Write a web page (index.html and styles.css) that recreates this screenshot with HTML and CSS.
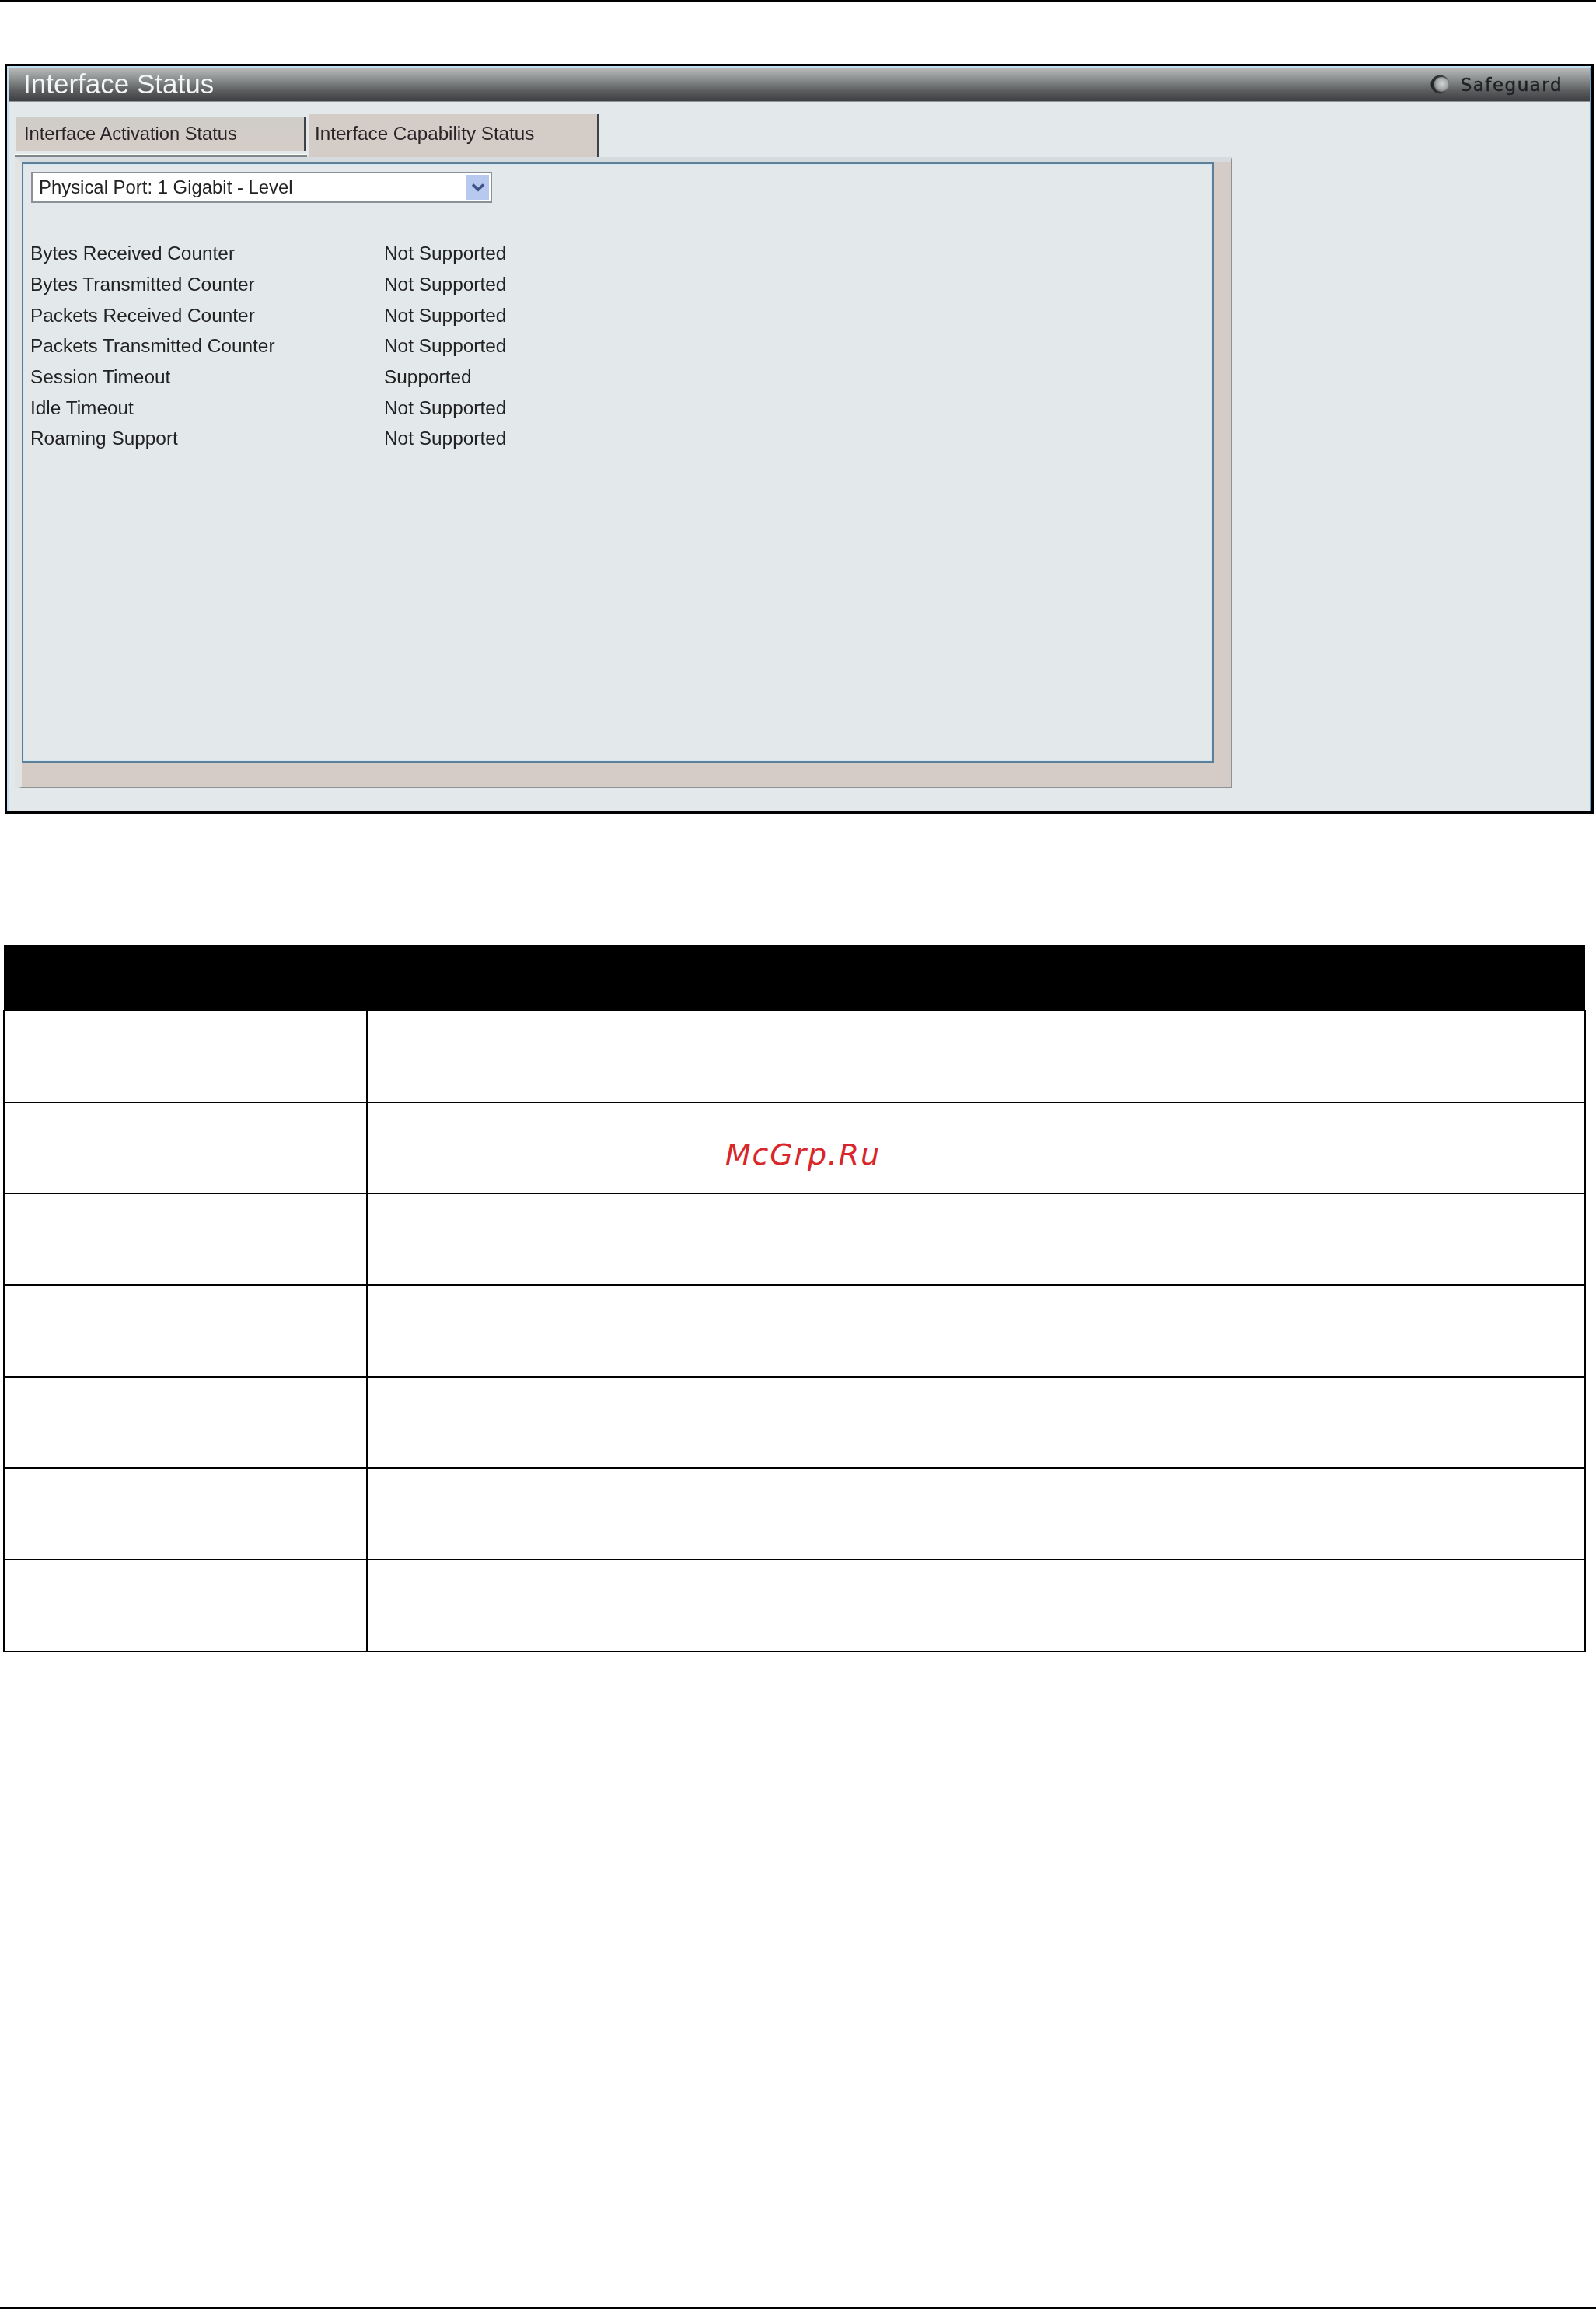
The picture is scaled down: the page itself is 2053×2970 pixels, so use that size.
FILE: index.html
```html
<!DOCTYPE html>
<html lang="en">
<head>
<meta charset="utf-8">
<title>Interface Status</title>
<link rel="stylesheet" href="styles.css">
</head>
<body>
<div class="page">
  <section class="window">
    <div class="window-inner">
      <header class="title-bar">
        <h1 class="title">Interface Status</h1>
        <div class="safeguard">
          <svg class="safeguard-icon" width="25" height="25" viewBox="0 0 25 25" aria-hidden="true">
            <defs>
              <linearGradient id="sgring" x1="0" y1="0" x2="1" y2="0">
                <stop offset="0" stop-color="#232426"/>
                <stop offset="0.6" stop-color="#3c3e40"/>
                <stop offset="1" stop-color="#77797b"/>
              </linearGradient>
              <radialGradient id="sg" cx="0.55" cy="0.45" r="0.6">
                <stop offset="0" stop-color="#d2d4d4"/>
                <stop offset="0.65" stop-color="#a4a7a8"/>
                <stop offset="1" stop-color="#66686a"/>
              </radialGradient>
            </defs>
            <circle cx="12.5" cy="12.5" r="12" fill="url(#sgring)"/>
            <circle cx="14" cy="12.5" r="9.5" fill="url(#sg)"/>
          </svg>
          <span class="safeguard-label">Safeguard</span>
        </div>
      </header>
      <div class="content">
        <nav class="tabs">
          <div class="tab-slot">
            <div class="tab tab-off">Interface Activation Status</div>
          </div>
          <div class="tab tab-on">Interface Capability Status</div>
        </nav>
        <div class="tab-panel">
          <div class="box">
            <div class="select">
              <span class="select-text">Physical Port: 1 Gigabit - Level</span>
              <span class="select-arrow">
                <svg width="18" height="12" viewBox="0 0 18 12" aria-hidden="true">
                  <path d="M2 2.5 L9 9 L16 2.5" fill="none" stroke="#3d5385" stroke-width="3.6"/>
                </svg>
              </span>
            </div>
            <dl class="caps">
              <div class="cap"><dt>Bytes Received Counter</dt><dd>Not Supported</dd></div>
              <div class="cap"><dt>Bytes Transmitted Counter</dt><dd>Not Supported</dd></div>
              <div class="cap"><dt>Packets Received Counter</dt><dd>Not Supported</dd></div>
              <div class="cap"><dt>Packets Transmitted Counter</dt><dd>Not Supported</dd></div>
              <div class="cap"><dt>Session Timeout</dt><dd>Supported</dd></div>
              <div class="cap"><dt>Idle Timeout</dt><dd>Not Supported</dd></div>
              <div class="cap"><dt>Roaming Support</dt><dd>Not Supported</dd></div>
            </dl>
          </div>
        </div>
      </div>
    </div>
  </section>

  <table class="params">
    <colgroup><col class="col-a"><col class="col-b"></colgroup>
    <thead>
      <tr><th></th><th class="th-last"></th></tr>
    </thead>
    <tbody>
      <tr><td></td><td></td></tr>
      <tr><td></td><td></td></tr>
      <tr><td></td><td></td></tr>
      <tr><td></td><td></td></tr>
      <tr><td></td><td></td></tr>
      <tr><td></td><td></td></tr>
      <tr><td></td><td></td></tr>
    </tbody>
  </table>

  <div class="watermark">McGrp.Ru</div>
</div>
</body>
</html>
```
FILE: styles.css
```css
* { box-sizing: border-box; }
html, body { margin: 0; padding: 0; background: #fff; }

.page {
  position: relative;
  display: flex;
  flex-direction: column;
  width: 2053px;
  height: 2970px;
  border-top: 2px solid #000;
  border-bottom: 2px solid #000;
  font-family: "Liberation Sans", Arial, sans-serif;
  color: #222;
}

/* screenshot window */
.window {
  width: 2044px;
  height: 965px;
  margin: 80px 0 0 7px;
  border-style: solid;
  border-color: #000;
  border-width: 3px 4px 4px 2px;
}
.window-inner {
  display: flex;
  flex-direction: column;
  height: 100%;
  background: #e3e8ea;
  border-style: solid;
  border-color: #c3e0f2 #5f9fd0 #e3e8ea #c3e0f2;
  border-width: 2px 2px 0 2px;
}
.title-bar {
  display: flex;
  align-items: center;
  justify-content: space-between;
  height: 44px;
  flex: none;
  padding: 0 35px 0 19px;
  background: linear-gradient(#b9bcbb 0%, #8b8e8e 35%, #5a5c5e 70%, #3e3f42 100%);
  border-bottom: 1px solid #8f9496;
}
.title {
  margin: 0 0 2px;
  font-size: 35px;
  font-weight: 400;
  line-height: 42px;
  color: #f4f5f5;
  filter: blur(0.5px);
}
.safeguard { display: flex; align-items: center; gap: 14px; }
.safeguard-icon { display: block; filter: blur(0.5px); }
.safeguard-label {
  font-family: "DejaVu Sans", sans-serif;
  font-size: 23px;
  letter-spacing: 1.5px;
  color: #1f2023;
  -webkit-text-stroke: 0.5px #1f2023;
  filter: blur(0.7px);
}

.content {
  display: flex;
  flex-direction: column;
  padding: 16px 0 0 8px;
  filter: blur(0.4px);
}
.tabs {
  display: flex;
  align-items: flex-end;
  height: 55px;
}
.tab-slot {
  width: 376px;
  height: 51px;
  padding: 0 0 4px 2px;
  border-bottom: 2px solid #80878a;
  box-shadow: inset 0 -2px 0 #fffdf0;
}
.tab {
  display: flex;
  align-items: center;
  color: #2a2327;
  background: #d3ccc7;
  border-right: 2px solid #3f4244;
}
.tab-off {
  width: 372px;
  height: 43px;
  padding: 0 0 1px 10px;
  font-size: 23.7px;
  background: linear-gradient(#cfcdc8, #d4ccc7);
}
.tab-on {
  width: 373px;
  height: 55px;
  margin-left: 2px;
  padding: 0 0 5px 8px;
  font-size: 24.2px;
}

.tab-panel {
  width: 1566px;
  height: 812px;
  padding: 0 22px 31px 0;
  background: #d5ccc8;
  border-style: solid;
  border-color: #d6dbdf #8f9292 #8f9292 #e2e4e3;
  border-width: 7px 2px 2px 9px;
}
.box {
  height: 100%;
  padding: 10px 10px 0 10px;
  background: #e3e8ea;
  border: 2px solid #5d7f97;
  box-shadow: inset 0 0 0 1px #cfe6f5;
}

.select {
  display: flex;
  align-items: center;
  justify-content: space-between;
  width: 593px;
  height: 40px;
  padding: 0 2px 0 8px;
  font-size: 23.9px;
  color: #222;
  background: #fff;
  border: 2px solid #8a9199;
}
.select-arrow {
  display: flex;
  align-items: center;
  justify-content: center;
  width: 29px;
  height: 32px;
  background: #b8c9ef;
}

.caps {
  margin: 45.5px 0 0 -1px;
  font-size: 24.4px;
}
.cap {
  display: grid;
  grid-template-columns: 455px 1fr;
  height: 39.7px;
  align-items: center;
}
.cap dt, .cap dd { margin: 0; }

/* parameter table (its text is left out of the reference) */
.params {
  width: 2036px;
  margin: 169px 0 0 4px;
  table-layout: fixed;
  border-collapse: collapse;
}
.col-a { width: 467px; }
.params th {
  position: relative;
  height: 84px;
  padding: 0;
  background: #000;
  border: 0;
}
.th-last::after {
  content: "";
  position: absolute;
  top: 8px;
  bottom: 6px;
  right: 1px;
  width: 1px;
  background: #fff;
}
.params td {
  height: 117.7px;
  padding: 0;
  border: 2px solid #000;
}

.watermark {
  position: absolute;
  left: 933px;
  top: 1461px;
  font-family: "DejaVu Sans", sans-serif;
  font-style: oblique;
  font-size: 38px;
  letter-spacing: 1.8px;
  line-height: 44px;
  color: #d8262a;
}
```
